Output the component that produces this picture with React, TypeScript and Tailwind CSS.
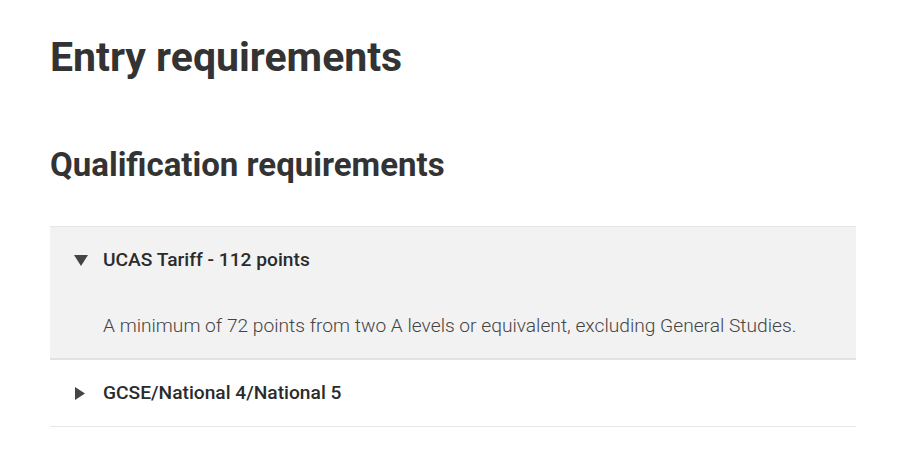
export default function App() {
  return (
    <div className="min-h-screen bg-white font-['Roboto',sans-serif] text-[#333333]">
      <div className="ml-[50px] w-[806px] pt-[33px]">
        <h1 className="text-[41px] font-bold leading-[48px]">Entry requirements</h1>
        <h2 className="mt-[64px] text-[33px] font-bold leading-[40px]">Qualification requirements</h2>
        <div className="mt-[41px] border-t border-[#e6e6e6]">
          <div className="border-b-2 border-[#e2e2e2] bg-[#f2f2f2]">
            <div className="flex h-[66px] items-center gap-[15px] pl-[24px]">
              <svg width="14" height="11" viewBox="0 0 14 11" className="fill-[#444]">
                <path d="M0 0H14L7 11Z" />
              </svg>
              <span className="text-[19.2px] font-medium text-[#2b2b2b]">UCAS Tariff - 112 points</span>
            </div>
            <p className="pb-[18px] pl-[53px] pt-[19px] text-[19.2px] font-light leading-[28px] text-[#444]">
              A minimum of 72 points from two A levels or equivalent, excluding General Studies.
            </p>
          </div>
          <div className="border-b border-[#e6e6e6]">
            <div className="flex h-[66px] items-center gap-[18px] pl-[25px]">
              <svg width="10" height="13" viewBox="0 0 10 13" className="fill-[#444]">
                <path d="M0 0L10 6.5L0 13Z" />
              </svg>
              <span className="text-[19.2px] font-medium text-[#2b2b2b]">GCSE/National 4/National 5</span>
            </div>
          </div>
        </div>
      </div>
    </div>
  );
}
